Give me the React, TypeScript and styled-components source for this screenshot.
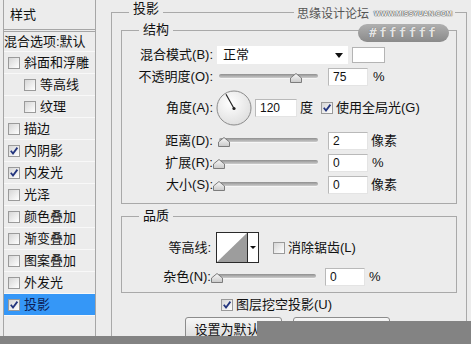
import React from 'react'
import styled, { createGlobalStyle } from 'styled-components'

const GlobalStyle = createGlobalStyle`
  html, body {
    margin: 0;
    padding: 0;
    background: #ececec;
  }
  body {
    font-family: "Liberation Sans", "Noto Sans CJK SC", sans-serif;
    font-size: 13px;
    line-height: 16px;
    color: #111;
  }
`

const styleList = [
  { label: '斜面和浮雕' },
  { label: '等高线', indent: true },
  { label: '纹理', indent: true },
  { label: '描边' },
  { label: '内阴影', checked: true },
  { label: '内发光', checked: true },
  { label: '光泽' },
  { label: '颜色叠加' },
  { label: '渐变叠加' },
  { label: '图案叠加' },
  { label: '外发光' },
  { label: '投影', checked: true, active: true },
]

const CheckBox = ({ checked, ml }: { checked?: boolean; ml?: number }) => (
  <Box $ml={ml}>
    {checked ? (
      <svg width="10" height="10" viewBox="0 0 10 10">
        <path d="M1.8 4.8 L4 7.6 L8.4 1.6" fill="none" stroke="#23357e" strokeWidth="1.8" />
      </svg>
    ) : null}
  </Box>
)

const Slider = ({ value }: { value: number }) => (
  <SliderWrap>
    <Track />
    <Thumb style={{ left: `calc(${value * 100}% - 6px)` }}>
      <svg width="12" height="10" viewBox="0 0 12 10">
        <defs>
          <linearGradient id="thumbFill" x1="0" y1="0" x2="0" y2="1">
            <stop offset="0" stopColor="#fafafa" />
            <stop offset="1" stopColor="#c9c9c9" />
          </linearGradient>
        </defs>
        <path d="M6 0.5 L11.5 5 V9.5 H0.5 V5 Z" fill="url(#thumbFill)" stroke="#7c7c7c" />
      </svg>
    </Thumb>
  </SliderWrap>
)

const Dial = () => (
  <DialWrap>
    <svg width="36" height="36" viewBox="0 0 36 36">
      <defs>
        <radialGradient id="dialFill" cx="0.4" cy="0.35" r="0.7">
          <stop offset="0" stopColor="#ffffff" />
          <stop offset="1" stopColor="#dedede" />
        </radialGradient>
      </defs>
      <circle cx="18" cy="18" r="17" fill="url(#dialFill)" stroke="#8b8b8b" />
      <line x1="18" y1="18.5" x2="10" y2="4.3" stroke="#222" strokeWidth="1.2" />
      <circle cx="18" cy="18.5" r="1.6" fill="#222" />
    </svg>
  </DialWrap>
)

const App = () => {
  return (
    <Page>
      <GlobalStyle />
      <Main>
        <Sidebar>
          <SideHeader>样式</SideHeader>
          <SideItem $plain>混合选项:默认</SideItem>
          {styleList.map((s) => (
            <SideItem key={s.label} $indent={s.indent} $active={s.active}>
              <CheckBox checked={s.checked} />
              <span>{s.label}</span>
            </SideItem>
          ))}
        </Sidebar>

        <Content>
          <Group>
            <Legend $top>投影</Legend>

            <Group $inner $pb={8}>
              <Legend>结构</Legend>
              <Row $mt={8}>
                <FieldLabel $w={91}>混合模式(B):</FieldLabel>
                <Select>
                  <span>正常</span>
                  <Caret />
                </Select>
                <Swatch />
              </Row>
              <Row>
                <FieldLabel $w={91}>不透明度(O):</FieldLabel>
                <Slider value={0.78} />
                <NumberBox readOnly value="75" />
                <Unit $ml={5}>%</Unit>
              </Row>
              <Row $h={38}>
                <FieldLabel $w={91}>角度(A):</FieldLabel>
                <Dial />
                <NumberBox readOnly value="120" $w={42} $ml={3} />
                <Unit $ml={3}>度</Unit>
                <CheckBox checked ml={8} />
                <Unit $ml={3}>使用全局光(G)</Unit>
              </Row>
              <Row $mt={4}>
                <FieldLabel $w={91}>距离(D):</FieldLabel>
                <Slider value={0.05} />
                <NumberBox readOnly value="2" />
                <Unit $ml={3}>像素</Unit>
              </Row>
              <Row>
                <FieldLabel $w={91}>扩展(R):</FieldLabel>
                <Slider value={0} />
                <NumberBox readOnly value="0" />
                <Unit $ml={4}>%</Unit>
              </Row>
              <Row>
                <FieldLabel $w={91}>大小(S):</FieldLabel>
                <Slider value={0} />
                <NumberBox readOnly value="0" />
                <Unit $ml={3}>像素</Unit>
              </Row>
            </Group>

            <Group $inner $pb={5} $mt={5}>
              <Legend>品质</Legend>
              <Row $h={31} $mt={9}>
                <FieldLabel $w={89}>等高线:</FieldLabel>
                <Contour>
                  <svg width="30" height="29" viewBox="0 0 30 29">
                    <rect width="30" height="29" fill="#fff" />
                    <path d="M0 29 L30 0 V29 Z" fill="#9d9d9d" />
                  </svg>
                  <ContourArrow>
                    <Caret $small />
                  </ContourArrow>
                </Contour>
                <CheckBox ml={14} />
                <Unit $ml={3}>消除锯齿(L)</Unit>
              </Row>
              <Row $mt={4}>
                <FieldLabel $w={89}>杂色(N):</FieldLabel>
                <Slider value={0} />
                <NumberBox readOnly value="0" $ml={9} />
                <Unit $ml={4}>%</Unit>
              </Row>
            </Group>

            <Row $h={18} $mt={3} $pl={100}>
              <CheckBox checked />
              <Unit $ml={3}>图层挖空投影(U)</Unit>
            </Row>
            <Buttons>
              <Button>设置为默认值</Button>
              <Button>复位为默认值</Button>
            </Buttons>
          </Group>
        </Content>
      </Main>
      <BottomBar />

      <Watermark>
        <span>思缘设计论坛</span>
        <SiteUrl>WWW.MISSYUAN.COM</SiteUrl>
      </Watermark>
      <ColorPill>#ffffff</ColorPill>
      <CoverBlock />
    </Page>
  )
}

export default App

const Page = styled.div`
  position: relative;
  width: 471px;
  height: 344px;
  display: flex;
  flex-direction: column;
  overflow: hidden;
`

const Main = styled.div`
  display: flex;
  height: 336px;
`

const Sidebar = styled.aside`
  width: 93px;
  margin-left: 3px;
  box-sizing: border-box;
  border-left: 1px solid #a6a6a6;
  border-right: 1px solid #a6a6a6;
  flex-shrink: 0;
`

const SideHeader = styled.div`
  height: 29px;
  padding-left: 6px;
  display: flex;
  align-items: center;
  border-bottom: 3px double #a6a6a6;
`

const SideItem = styled.div<{ $indent?: boolean; $active?: boolean; $plain?: boolean }>`
  height: ${(p) => (p.$plain ? 19 : 21)}px;
  display: flex;
  align-items: center;
  gap: 4px;
  padding-left: ${(p) => (p.$plain ? 0 : p.$indent ? 20 : 4)}px;
  border-bottom: 1px solid #f8f8f8;
  background: ${(p) => (p.$active ? '#3597f7' : 'transparent')};
  color: ${(p) => (p.$active ? '#0d1d55' : '#111')};
  white-space: nowrap;
  overflow: visible;
`

const Box = styled.span<{ $ml?: number }>`
  width: 12px;
  height: 12px;
  margin-left: ${(p) => p.$ml ?? 0}px;
  box-sizing: border-box;
  flex-shrink: 0;
  display: flex;
  align-items: center;
  justify-content: center;
  border: 1px solid #9a9a9a;
  background: linear-gradient(135deg, #d6d6d6, #ffffff);
`

const Content = styled.div`
  flex: 1;
  min-width: 0;
  padding: 1px 4px 0 15px;
`

const Group = styled.fieldset<{ $inner?: boolean; $pb?: number; $mt?: number }>`
  margin: ${(p) => p.$mt ?? 0}px 0 0;
  padding: 0 ${(p) => (p.$inner ? 0 : 9)}px ${(p) => p.$pb ?? 0}px;
  border: 1px solid #a9a9a9;
  min-width: 0;
  min-inline-size: 0;
`

const Legend = styled.legend<{ $top?: boolean }>`
  margin-left: ${(p) => (p.$top ? 8 : 17)}px;
  padding: 0 4px ${(p) => (p.$top ? 6 : 0)}px;
  line-height: ${(p) => (p.$top ? 16 : 14)}px;
`

const Row = styled.div<{ $h?: number; $mt?: number; $pl?: number }>`
  display: flex;
  align-items: center;
  height: ${(p) => p.$h ?? 20}px;
  margin-top: ${(p) => p.$mt ?? 2}px;
  padding-left: ${(p) => p.$pl ?? 0}px;
  white-space: nowrap;
`

const FieldLabel = styled.span<{ $w: number }>`
  width: ${(p) => p.$w}px;
  text-align: right;
  flex-shrink: 0;
`

const Select = styled.div`
  width: 131px;
  height: 18px;
  margin-left: 4px;
  box-sizing: border-box;
  padding: 0 5px 0 6px;
  display: flex;
  align-items: center;
  justify-content: space-between;
  background: #fff;
`

const Caret = styled.span<{ $small?: boolean }>`
  width: 0;
  height: 0;
  border-left: ${(p) => (p.$small ? 3 : 4)}px solid transparent;
  border-right: ${(p) => (p.$small ? 3 : 4)}px solid transparent;
  border-top: ${(p) => (p.$small ? 3 : 5)}px solid #111;
`

const Swatch = styled.div`
  width: 33px;
  height: 16px;
  margin-left: 4px;
  box-sizing: border-box;
  border: 1px solid #b4b4b4;
  background: #fff;
`

const SliderWrap = styled.div`
  position: relative;
  width: 99px;
  height: 20px;
  margin-left: 6px;
  flex-shrink: 0;
`

const Track = styled.div`
  margin-top: 7px;
  height: 4px;
  border-radius: 2px;
  background: linear-gradient(#8f8f8f, #cdcdcd);
  box-shadow: 0 1px 0 #f6f6f6;
`

const Thumb = styled.div`
  position: absolute;
  top: 6px;
  width: 12px;
  height: 10px;
  display: flex;
`

const NumberBox = styled.input<{ $w?: number; $ml?: number }>`
  width: ${(p) => p.$w ?? 40}px;
  height: 18px;
  margin: 0 0 0 ${(p) => p.$ml ?? 10}px;
  box-sizing: border-box;
  padding: 0 0 0 4px;
  border: 1px solid;
  border-color: #b9b9b9 #e4e4e4 #e4e4e4 #b9b9b9;
  background: #fff;
  font-family: "Liberation Sans", sans-serif;
  font-size: 12px;
  color: #111;
  outline: none;
`

const Unit = styled.span<{ $ml: number }>`
  margin-left: ${(p) => p.$ml}px;
`

const DialWrap = styled.div`
  width: 36px;
  height: 36px;
  margin-left: 3px;
  display: flex;
`

const Contour = styled.div`
  display: flex;
  margin-left: 5px;
  height: 31px;
  box-sizing: border-box;
  border: 1px solid #2a2a2a;
`

const ContourArrow = styled.div`
  width: 10px;
  display: flex;
  align-items: center;
  justify-content: center;
  border-left: 1px solid #2a2a2a;
  background: #fff;
`

const Buttons = styled.div`
  display: flex;
  gap: 11px;
  margin-top: 3px;
  padding-left: 64px;
`

const Button = styled.button`
  width: 97px;
  height: 22px;
  padding: 0;
  border: 1px solid #8c8c8c;
  border-radius: 3px;
  background: linear-gradient(#f7f7f7, #dcdcdc);
  font-family: "Liberation Sans", "Noto Sans CJK SC", sans-serif;
  font-size: 13px;
  color: #111;
`

const BottomBar = styled.div`
  height: 8px;
  background: #838383;
`

const CoverBlock = styled.div`
  position: absolute;
  left: 257px;
  top: 321px;
  right: 0;
  bottom: 0;
  background: #838383;
`

const Watermark = styled.div`
  position: absolute;
  left: 294px;
  top: 6px;
  display: flex;
  align-items: center;
  gap: 5px;
  padding: 0 3px;
  white-space: nowrap;
  background: #ececec;
  color: #555;
  font-size: 12px;
  line-height: 16px;
`

const SiteUrl = styled.span`
  font-family: "Liberation Sans", sans-serif;
  font-size: 7px;
  font-weight: bold;
  letter-spacing: 0.1px;
  color: #f2f2f2;
  text-shadow: 0 0 1px #555, 0 0 1px #555, 0 0 1px #555;
`

const ColorPill = styled.div`
  position: absolute;
  left: 358px;
  top: 24px;
  width: 91px;
  height: 18px;
  border-radius: 9px;
  display: flex;
  align-items: center;
  justify-content: center;
  background: linear-gradient(#b0b0b0, #8a8a8a);
  font-family: "DejaVu Sans Mono", monospace;
  font-size: 13px;
  font-weight: bold;
  letter-spacing: 2px;
  color: #e4e4e4;
  text-shadow: 0 0 1px #666;
`
